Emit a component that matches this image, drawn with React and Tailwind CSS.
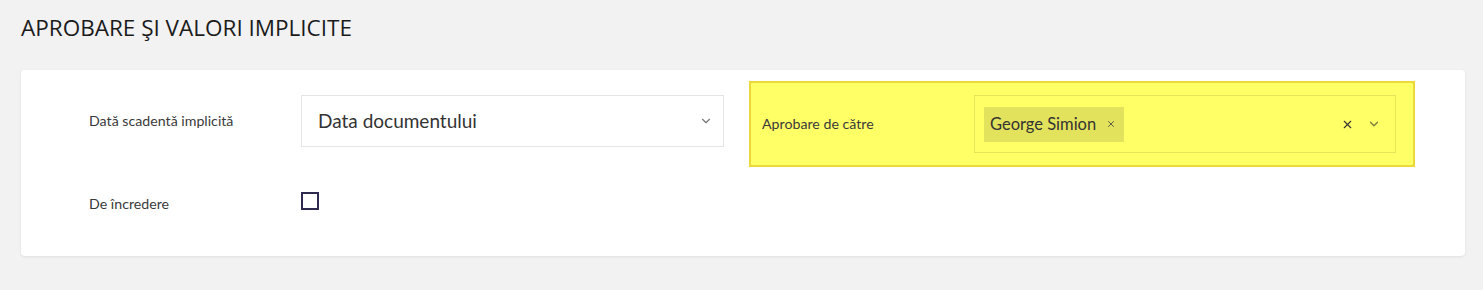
import React from "react";
import { ChevronDown, X } from "lucide-react";

const sans = "font-['Lato','Open_Sans',sans-serif]";

function Label({ children, className = "" }) {
  return (
    <div className={`w-[212px] shrink-0 text-[14.2px] text-[#3a3a3a] ${sans} ${className}`}>
      {children}
    </div>
  );
}

export default function App() {
  return (
    <div className="min-h-[290px] w-full bg-[#f2f2f2] pl-[21px] pr-[18px] pt-[13px] pb-[36px]">
      <h1 className="text-[22.5px] leading-[30px] text-[#1b1b1b] font-['Open_Sans',sans-serif] font-normal">
        APROBARE ŞI VALORI IMPLICITE
      </h1>

      <div className="mt-[27px] rounded bg-white pl-[68px] pr-[49px] pt-[11px] pb-[42px] shadow-[0_1px_3px_rgba(0,0,0,0.08)]">
        {/* first row */}
        <div className="flex items-start gap-[25px]">
          <div className="mt-[14px] flex items-center">
            <Label>Dată scadentă implicită</Label>
            <div className="flex h-[52px] w-[423px] items-center justify-between border border-[#e4e4e4] pl-[16px] pr-[10px]">
              <span className={`text-[19px] text-[#333] ${sans}`}>
                Data documentului
              </span>
              <ChevronDown size={14} strokeWidth={2} className="text-[#777]" />
            </div>
          </div>

          <div className="flex items-center border-2 border-[#ecd83a] bg-[#ffff66] pl-[11px] pr-[17px] py-[12px]">
            <Label>Aprobare de către</Label>
            <div className="flex h-[58px] w-[422px] items-center justify-between border border-[#e6e65a] pl-[9px] pr-[14px]">
              <div className="flex h-[35px] items-center gap-[10px] bg-[#e2e25c] pl-[6px] pr-[8px]">
                <span className={`text-[16.5px] text-[#333] ${sans}`}>
                  George Simion
                </span>
                <X size={10} strokeWidth={2} className="text-[#444]" />
              </div>
              <div className="flex items-center gap-[13px]">
                <X size={13} strokeWidth={2} className="text-[#333]" />
                <ChevronDown size={14} strokeWidth={2.2} className="text-[#7a7a40]" />
              </div>
            </div>
          </div>
        </div>

        {/* second row */}
        <div className="mt-[25px] flex items-start">
          <Label className="mt-[1px]">De încredere</Label>
          <div className="h-[18px] w-[18px] border-2 border-[#2e2a52] bg-white" />
        </div>
      </div>
    </div>
  );
}
